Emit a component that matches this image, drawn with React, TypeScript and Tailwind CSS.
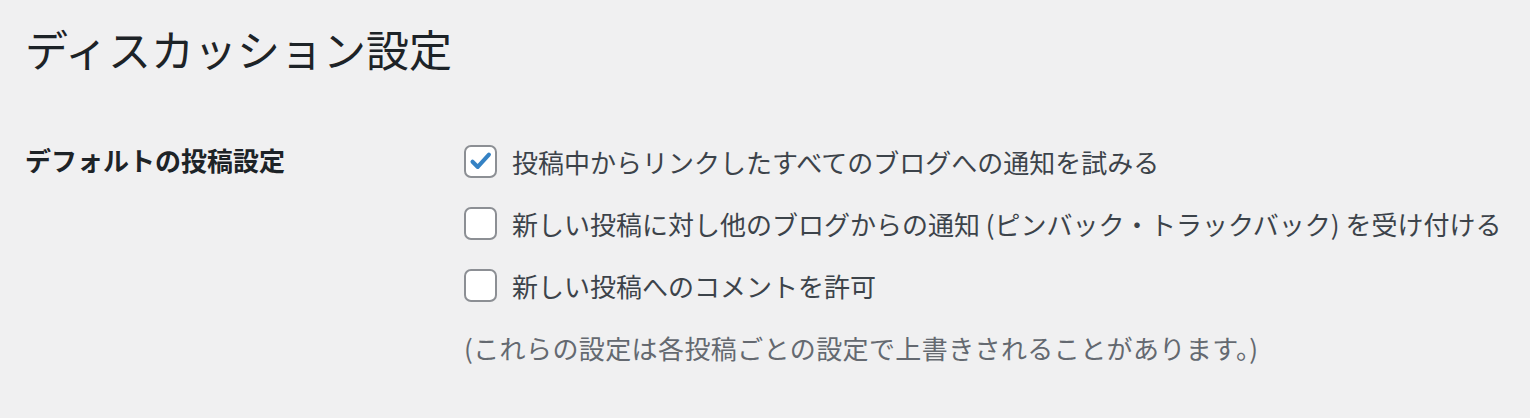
import React from 'react';

const options = [
  { label: '投稿中からリンクしたすべてのブログへの通知を試みる', checked: true },
  { label: '新しい投稿に対し他のブログからの通知 (ピンバック・トラックバック) を受け付ける', checked: false },
  { label: '新しい投稿へのコメントを許可', checked: false },
];

const CheckBox: React.FC<{ checked: boolean }> = ({ checked }) => (
  <span className="w-[33px] h-[33px] shrink-0 rounded-[7px] border-2 border-[#8c8f94] bg-white flex items-center justify-center">
    {checked && (
      <svg viewBox="0 0 20 20" className="w-[30px] h-[30px]">
        <path d="M4.5 10.5l3.6 3.6L15.8 5.6" fill="none" stroke="#3582c4" strokeWidth="2.8" strokeLinecap="round" strokeLinejoin="round" />
      </svg>
    )}
  </span>
);

export default function App() {
  return (
    <div className="min-h-screen bg-[#f0f0f1] pl-[25px] pt-[19px] font-['Noto_Sans_CJK_JP','Noto_Sans',sans-serif]">
      <h1 className="text-[43px] leading-[58px] font-normal text-[#1d2327]">ディスカッション設定</h1>

      <div className="mt-[53px] flex">
        <div className="w-[439px] shrink-0 pt-[12px] text-[26px] leading-[36px] font-bold text-[#1d2327]">
          デフォルトの投稿設定
        </div>
        <div className="flex flex-col">
          {options.map((opt) => (
            <label key={opt.label} className="flex items-center gap-[15px] h-[62px] text-[26px] text-[#3c434a]">
              <CheckBox checked={opt.checked} />
              <span>{opt.label}</span>
            </label>
          ))}
          <p className="mt-[14px] text-[26px] leading-[36px] tracking-[0.4px] text-[#646970]">
            (これらの設定は各投稿ごとの設定で上書きされることがあります。)
          </p>
        </div>
      </div>
    </div>
  );
}
